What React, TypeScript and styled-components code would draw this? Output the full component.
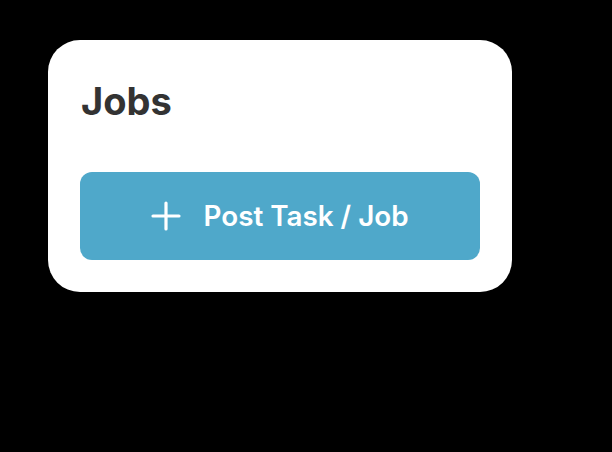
import React from 'react'
import styled, { createGlobalStyle } from 'styled-components'

const GlobalStyle = createGlobalStyle`
  html, body {
    margin: 0;
    padding: 0;
    background: #000000;
  }
  body {
    font-family: Inter, "Noto Sans", sans-serif;
  }
`

const Page = styled.main`
  min-height: 452px;
  padding: 40px 0 0 48px;
  box-sizing: border-box;
`

const Card = styled.section`
  width: 464px;
  height: 252px;
  box-sizing: border-box;
  padding: 32px;
  background: #ffffff;
  border-radius: 32px;
  display: flex;
  flex-direction: column;
`

const Title = styled.h1`
  margin: 7px 0 0 1px;
  font-size: 38px;
  line-height: 44px;
  font-weight: 700;
  color: #333333;
`

const PostButton = styled.button`
  margin-top: 49px;
  height: 88px;
  width: 100%;
  border: none;
  border-radius: 12px;
  background: #4fa8ca;
  color: #ffffff;
  font-family: inherit;
  font-size: 27.8px;
  font-weight: 600;
  display: flex;
  align-items: center;
  justify-content: center;
  gap: 22px;
  cursor: pointer;
`

const PlusIcon = () => (
  <svg width="30" height="30" viewBox="0 0 30 30" fill="none">
    <path d="M15 2v26M2 15h26" stroke="#ffffff" strokeWidth="3.2" strokeLinecap="round" />
  </svg>
)

const App: React.FC = () => {
  return (
    <>
      <GlobalStyle />
      <Page>
        <Card>
          <Title>Jobs</Title>
          <PostButton>
            <PlusIcon />
            Post Task / Job
          </PostButton>
        </Card>
      </Page>
    </>
  )
}

export default App
